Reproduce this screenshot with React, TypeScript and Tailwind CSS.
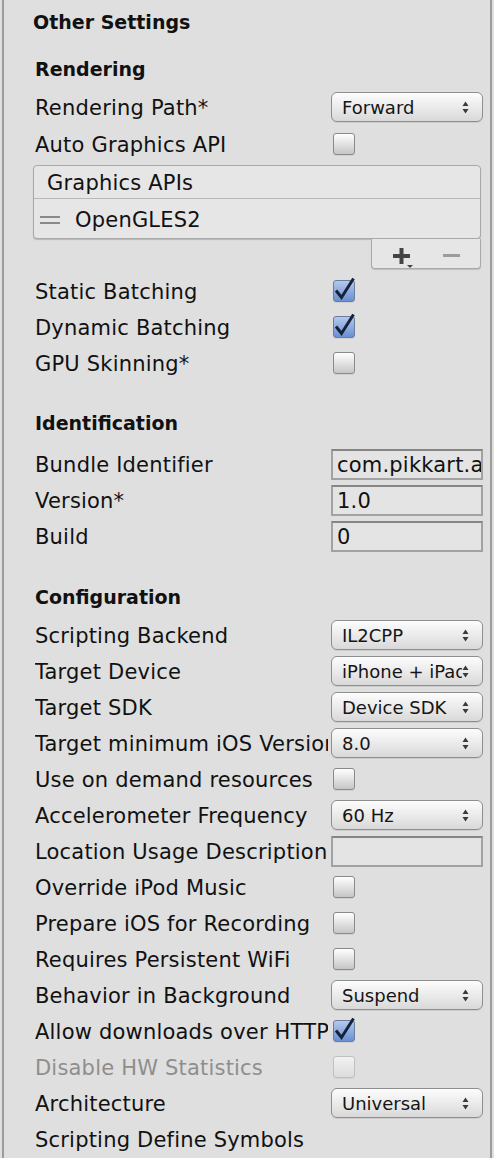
import React from "react";

const Arrows = () => (
  <svg width="7" height="13" viewBox="0 0 7 13" className="shrink-0">
    <path d="M0.5 5 L3.5 0.5 L6.5 5 Z" fill="#3a3a3a" />
    <path d="M0.5 8 L3.5 12.5 L6.5 8 Z" fill="#3a3a3a" />
  </svg>
);

const Popup = ({ value }: { value: string }) => (
  <div className="ml-[3px] flex h-[30px] w-[152px] items-center rounded-[6px] border border-[#8e8e8e] bg-linear-to-b from-[#fdfdfd] to-[#d9d9d9] pl-[10px] pr-[13px] shadow-[0_1px_0_rgba(0,0,0,0.08)]">
    <span className="min-w-0 flex-1 overflow-hidden whitespace-nowrap pt-[2px] text-[18px] leading-[24px] text-[#151515]">
      {value}
    </span>
    <Arrows />
  </div>
);

const Field = ({ value }: { value: string }) => (
  <div className="ml-[3px] flex h-[31px] w-[152px] items-center overflow-hidden border-2 border-[#a2a2a2] border-t-[#858585] bg-[#e4e4e4] pl-[4px]">
    <span className="whitespace-nowrap pt-[2px] text-[21px] leading-[26px] tracking-[0.2px] text-[#111]">{value}</span>
  </div>
);

const Check = ({ checked, disabled }: { checked?: boolean; disabled?: boolean }) => {
  let cls =
    "relative ml-[5px] h-[22px] w-[22px] rounded-[3px] border bg-linear-to-b shadow-[0_1px_0_rgba(0,0,0,0.06)] ";
  if (checked) cls += "border-[#6a7d9c] from-[#b4c8ec] to-[#6a90d2]";
  else if (disabled) cls += "border-[#c0c0c0] from-[#f2f2f2] to-[#dcdcdc]";
  else cls += "border-[#8a8a8a] from-[#ffffff] to-[#c6c6c6]";
  return (
    <div className={cls}>
      {checked && (
        <svg
          width="22"
          height="22"
          viewBox="0 0 22 22"
          className="absolute left-[-1px] top-[-1px] overflow-visible"
        >
          <path
            d="M3 10.5 L8.5 17.5 L20.5 -1.5"
            fill="none"
            stroke="#17223a"
            strokeWidth="3"
            strokeLinejoin="miter"
          />
        </svg>
      )}
    </div>
  );
};

const Row = ({
  label,
  children,
  className = "",
  disabled,
}: {
  label: string;
  children?: React.ReactNode;
  className?: string;
  disabled?: boolean;
}) => (
  <div className={"flex h-9 items-center " + className}>
    <div
      className={
        "w-[293px] shrink-0 overflow-hidden whitespace-nowrap pt-[2px] text-[21px] leading-[26px] tracking-[0.2px] " +
        (disabled ? "text-[#8e8e8e]" : "text-[#111]")
      }
    >
      {label}
    </div>
    {children}
  </div>
);

const Header = ({ text, className = "" }: { text: string; className?: string }) => (
  <div className={"flex h-9 items-center pt-[2px] text-[19px] font-bold leading-[24px] text-[#111] " + className}>
    {text}
  </div>
);

export default function App() {
  return (
    <div className="h-[1158px] w-[494px] overflow-hidden bg-[#dfdfdf] font-['DejaVu_Sans',sans-serif]">
      <div className="ml-[2px] h-full w-[490px] border-x-2 border-[#9c9c9c] pl-[31px]">
        <div className="-ml-[2px] flex h-[42px] items-center pt-[2px] text-[19px] font-bold leading-[24px] text-[#111]">
          Other Settings
        </div>
        <Header text="Rendering" className="mt-[8px]" />
        <Row label="Rendering Path*" className="mt-[3px]">
          <Popup value="Forward" />
        </Row>
        <Row label="Auto Graphics API" className="mt-[1px]">
          <Check />
        </Row>

        <div className="-ml-[2px] mt-[3px] w-[448px]">
          <div className="rounded-[4px] border border-[#a9a9a9] bg-[#e6e6e6] shadow-[0_1px_1px_rgba(0,0,0,0.18)]">
            <div className="flex h-[33px] items-center border-b border-[#b9b9b9] pl-[13px] pt-[2px] text-[21px] leading-[26px] tracking-[0.2px] text-[#111]">
              Graphics APIs
            </div>
            <div className="flex h-[39px] items-center pl-[6px]">
              <div className="mt-[2px] flex w-[20px] flex-col gap-[4px]">
                <div className="h-[2px] w-[20px] bg-[#8a8a8a]" />
                <div className="h-[2px] w-[20px] bg-[#8a8a8a]" />
              </div>
              <span className="ml-[15px] pt-[2px] text-[21px] leading-[26px] tracking-[0.2px] text-[#111]">OpenGLES2</span>
            </div>
          </div>
          <div className="relative ml-[338px] h-[30px] w-[110px] rounded-b-[4px] border border-t-0 border-[#a9a9a9] bg-[#e6e6e6] shadow-[0_1px_1px_rgba(0,0,0,0.15)]">
            <svg width="24" height="22" viewBox="0 0 24 22" className="absolute left-[21px] top-[9px]">
              <rect x="0" y="6" width="17" height="4" fill="#444" />
              <rect x="6.5" y="0" width="4" height="16" fill="#444" />
              <path d="M14 17 L20 17 L17 20 Z" fill="#444" />
            </svg>
            <div className="absolute left-[71px] top-[15px] h-[3px] w-[17px] bg-[#9c9c9c]" />
          </div>
        </div>

        <Row label="Static Batching" className="mt-[4px]">
          <Check checked />
        </Row>
        <Row label="Dynamic Batching">
          <Check checked />
        </Row>
        <Row label="GPU Skinning*">
          <Check />
        </Row>

        <Header text="Identification" className="mt-[23px]" />
        <Row label="Bundle Identifier" className="mt-[6px]">
          <Field value="com.pikkart.ar" />
        </Row>
        <Row label="Version*">
          <Field value="1.0" />
        </Row>
        <Row label="Build">
          <Field value="0" />
        </Row>

        <Header text="Configuration" className="mt-[24px]" />
        <Row label="Scripting Backend" className="mt-[3px]">
          <Popup value="IL2CPP" />
        </Row>
        <Row label="Target Device">
          <Popup value="iPhone + iPad" />
        </Row>
        <Row label="Target SDK">
          <Popup value="Device SDK" />
        </Row>
        <Row label="Target minimum iOS Version">
          <Popup value="8.0" />
        </Row>
        <Row label="Use on demand resources">
          <Check />
        </Row>
        <Row label="Accelerometer Frequency">
          <Popup value="60 Hz" />
        </Row>
        <Row label="Location Usage Description">
          <Field value="" />
        </Row>
        <Row label="Override iPod Music">
          <Check />
        </Row>
        <Row label="Prepare iOS for Recording">
          <Check />
        </Row>
        <Row label="Requires Persistent WiFi">
          <Check />
        </Row>
        <Row label="Behavior in Background">
          <Popup value="Suspend" />
        </Row>
        <Row label="Allow downloads over HTTP">
          <Check checked />
        </Row>
        <Row label="Disable HW Statistics" disabled>
          <Check disabled />
        </Row>
        <Row label="Architecture">
          <Popup value="Universal" />
        </Row>
        <Row label="Scripting Define Symbols" />
      </div>
    </div>
  );
}
